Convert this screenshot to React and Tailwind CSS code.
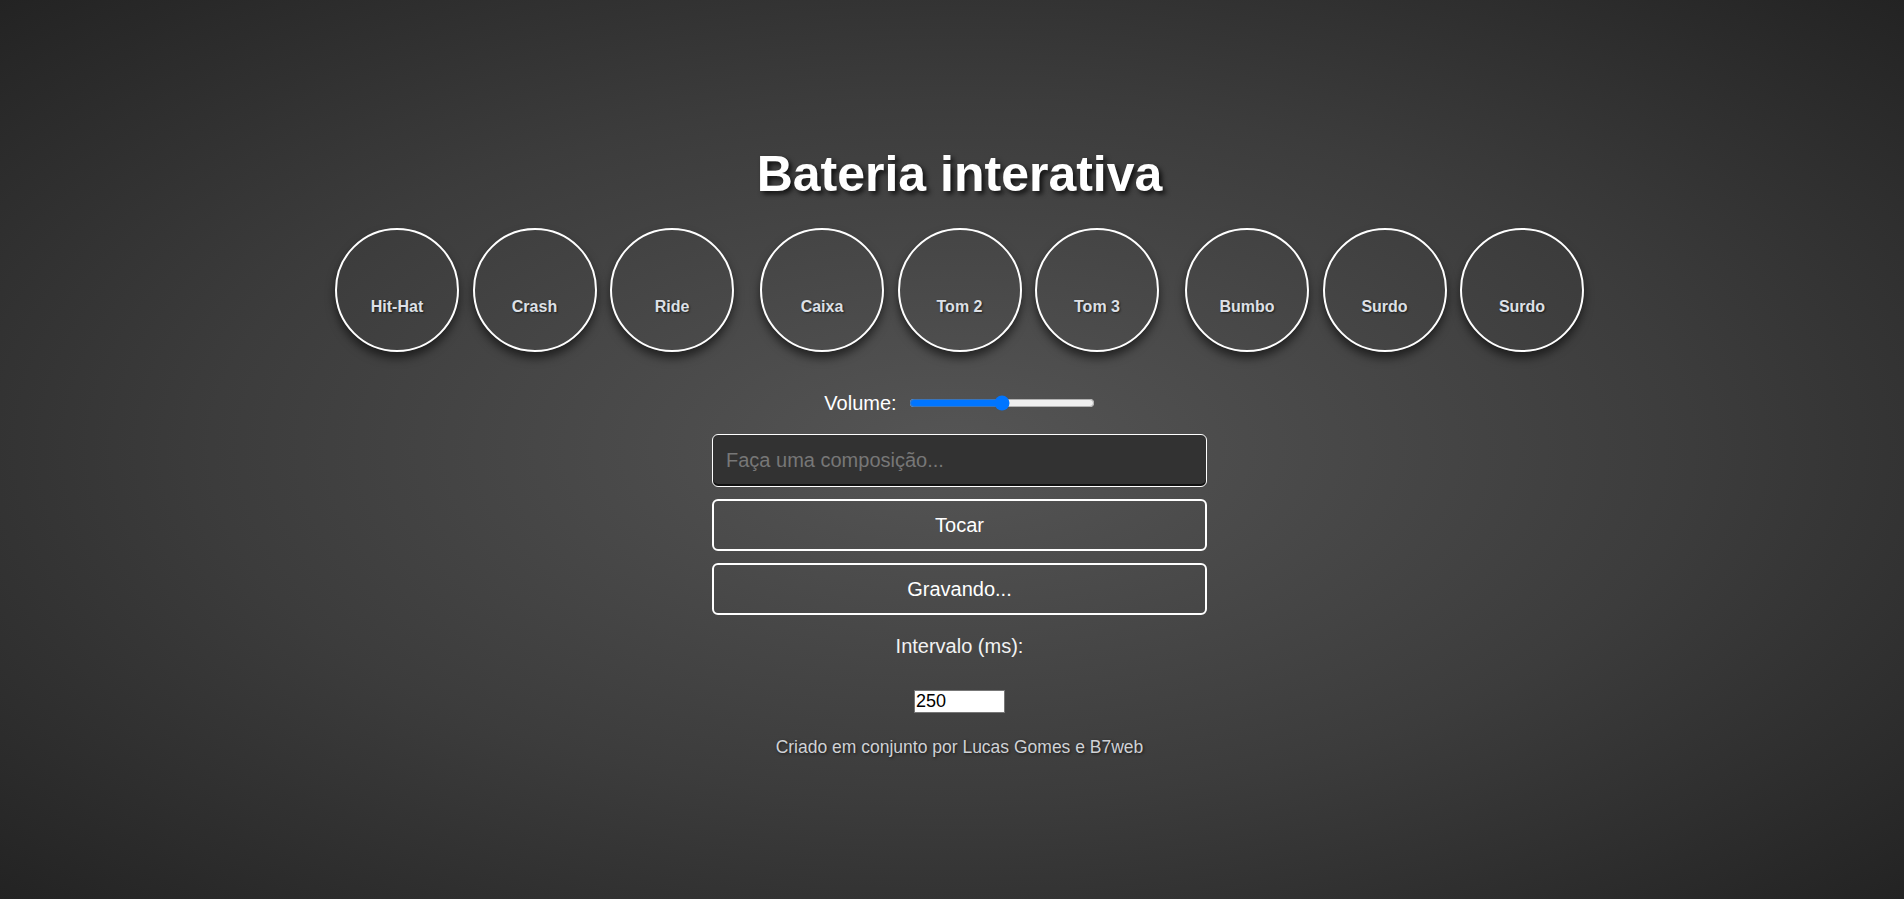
import { useState } from 'react';

const GROUPS = [
  ['Hit-Hat', 'Crash', 'Ride'],
  ['Caixa', 'Tom 2', 'Tom 3'],
  ['Bumbo', 'Surdo', 'Surdo'],
];

const Pad = ({ label }) => (
  <div className="w-[124px] h-[124px] rounded-full border-2 border-white flex items-center justify-center pt-[34px] shadow-[0_6px_10px_rgba(0,0,0,0.55)] cursor-pointer">
    <span className="text-[16px] font-bold text-[#dde0e6] [text-shadow:1px_1px_2px_rgba(0,0,0,0.6)]">{label}</span>
  </div>
);

export default function App() {
  const [volume, setVolume] = useState(50);
  const [song, setSong] = useState('');
  const [interval, setIntervalMs] = useState(250);

  return (
    <div className="min-h-screen w-full bg-[radial-gradient(ellipse_at_center,#555555_0%,#3c3c3c_55%,#232323_100%)] font-['Liberation_Sans',Arial,sans-serif] text-white">
      <div className="flex flex-col items-center pl-[15px] pt-[145px]">
        {/* Title */}
        <h1 className="text-[50px] leading-[58px] font-bold [text-shadow:3px_3px_5px_rgba(0,0,0,0.75)]">
          Bateria interativa
        </h1>

        {/* Pads */}
        <div className="flex gap-[26px] mt-[25px]">
          {GROUPS.map((group, gi) => (
            <div key={gi} className="flex gap-[13.5px]">
              {group.map((name, i) => (
                <Pad key={i} label={name} />
              ))}
            </div>
          ))}
        </div>

        {/* Volume */}
        <div className="flex items-center gap-[12px] mt-[38px] h-[26px]">
          <span className="text-[20px]">Volume:</span>
          <input
            type="range"
            min="0"
            max="100"
            value={volume}
            onChange={(e) => setVolume(e.target.value)}
            className="w-[186px] accent-[#0075ff]"
          />
        </div>

        {/* Composer */}
        <div className="flex flex-col gap-[12px] mt-[18px] w-[495px]">
          <input
            type="text"
            value={song}
            onChange={(e) => setSong(e.target.value)}
            placeholder="Faça uma composição..."
            className="h-[53px] w-full rounded-[6px] border border-white bg-[#323232] px-[13px] text-[20px] text-white placeholder:text-[#777] shadow-[inset_0_-2px_0_#111] outline-none"
          />
          <button className="h-[52px] w-full rounded-[6px] border-2 border-white text-[20px] text-white">
            Tocar
          </button>
          <button className="h-[52px] w-full rounded-[6px] border-2 border-white text-[20px] text-white">
            Gravando...
          </button>
        </div>

        {/* Interval */}
        <label className="mt-[19px] text-[20px] text-[#f2f2f2] leading-[24px]">Intervalo (ms):</label>
        <input
          type="number"
          value={interval}
          onChange={(e) => setIntervalMs(e.target.value)}
          className="mt-[32px] w-[91px] h-[23px] bg-white border border-[#777] text-black text-[18px] px-[1px] outline-none"
        />

        <p className="mt-[21px] text-[17.5px] text-[#d0d2d6] [text-shadow:1px_1px_3px_rgba(0,0,0,0.6)]">
          Criado em conjunto por Lucas Gomes e B7web
        </p>
      </div>
    </div>
  );
}
